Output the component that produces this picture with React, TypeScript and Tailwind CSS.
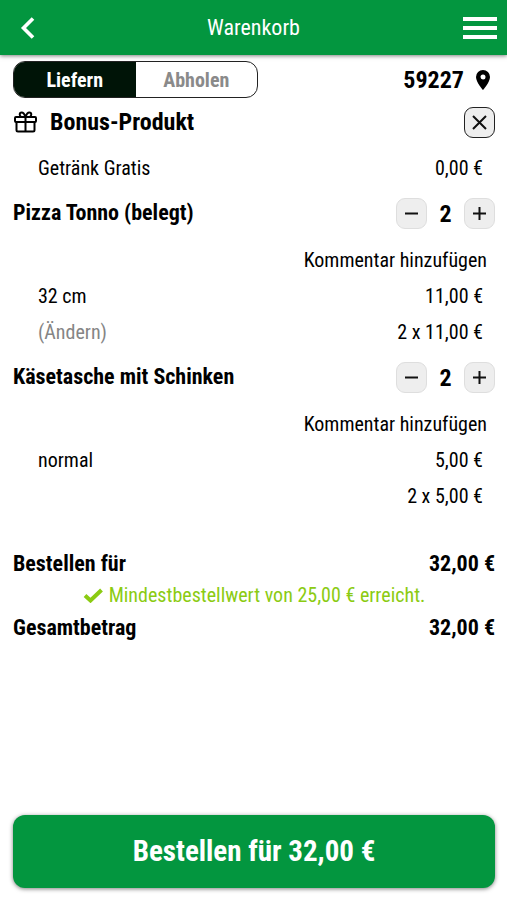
import { useState } from "react";
import type { ReactNode } from "react";

function Stepper({ name }: { name: string }) {
  const [count, setCount] = useState(2);
  const button =
    "flex size-[31px] items-center justify-center rounded-[9px] border border-[#dedede] bg-[#eeeeee]";
  return (
    <div className="flex items-center">
      <button type="button" aria-label={`${name} weniger`} className={button} onClick={() => setCount(Math.max(1, count - 1))}>
        <svg viewBox="0 0 15 15" className="size-[15px]" fill="none" stroke="#111" strokeWidth="2" aria-hidden="true">
          <path d="M1 7.500h13" />
        </svg>
      </button>
      <span className="w-[37px] text-center text-2xl leading-7 font-bold">{count}</span>
      <button type="button" aria-label={`${name} mehr`} className={button} onClick={() => setCount(count + 1)}>
        <svg viewBox="0 0 15 15" className="size-[15px]" fill="none" stroke="#111" strokeWidth="2" aria-hidden="true">
          <path d="M1 7.500h13M7.500 1v13" />
        </svg>
      </button>
    </div>
  );
}

function Line({ left, right }: { left?: ReactNode; right: string }) {
  return (
    <div className="flex h-9 items-center justify-between pr-3 pl-[25px]">
      <span>{left}</span>
      <span>{right}</span>
    </div>
  );
}

function Item({ name, children }: { name: string; children: ReactNode }) {
  return (
    <section className="mt-3">
      <div className="flex items-start justify-between">
        <h2 className="text-[22px] leading-[30px] font-bold">{name}</h2>
        <Stepper name={name} />
      </div>
      <div className="mt-[13px] flex h-9 items-center justify-end pr-2">
        <button type="button">Kommentar hinzufügen</button>
      </div>
      {children}
    </section>
  );
}

function Total({ label, value }: { label: string; value: string }) {
  return (
    <div className="flex h-8 items-center justify-between text-[22px] font-bold">
      <span>{label}</span>
      <span>{value}</span>
    </div>
  );
}

export default function App() {
  const [pickup, setPickup] = useState(false);
  return (
    <div className="flex min-h-screen flex-col bg-white font-['Roboto_Condensed',Roboto,sans-serif] text-[20px] text-black">
      <header className="grid h-[55px] grid-cols-[1fr_auto_1fr] items-center bg-[#03963f] px-[10px] text-white shadow-[0_1px_4px_rgba(0,0,0,0.5)]">
        <button type="button" aria-label="Zurück" className="justify-self-start pl-[10px]">
          <svg viewBox="0 0 16 22" className="h-[22px] w-4" fill="none" stroke="currentColor" strokeWidth="3.6" aria-hidden="true">
            <path d="M13 1.500 3.500 11 13 20.500" />
          </svg>
        </button>
        <h1 className="text-[22px]">Warenkorb</h1>
        <button type="button" aria-label="Menü" className="justify-self-end">
          <svg viewBox="0 0 34 24" className="h-6 w-[34px]" fill="currentColor" aria-hidden="true">
            <path d="M0 1h34v4H0zM0 10h34v4H0zM0 19h34v4H0z" />
          </svg>
        </button>
      </header>

      <main className="flex grow flex-col pt-[6px] pr-3 pb-3 pl-[13px]">
        <div className="flex items-center justify-between">
          <div className="grid h-[37px] w-[245px] grid-cols-2 overflow-hidden rounded-[12px] border border-[#222] font-bold">
            <button type="button" aria-pressed={!pickup} onClick={() => setPickup(false)} className={pickup ? "text-[#8a8a8a]" : "bg-[#001407] text-white"}>
              Liefern
            </button>
            <button type="button" aria-pressed={pickup} onClick={() => setPickup(true)} className={pickup ? "bg-[#001407] text-white" : "text-[#8a8a8a]"}>
              Abholen
            </button>
          </div>
          <button type="button" className="flex items-center gap-3 pr-[5px] text-2xl font-bold">
            59227
            <svg viewBox="0 0 14 20" className="h-5 w-[14px]" fill="currentColor" aria-hidden="true">
              <path fillRule="evenodd" d="M7 0a7 7 0 0 0-7 7c0 5.200 7 13 7 13s7-7.800 7-13a7 7 0 0 0-7-7Zm0 4.500a2.500 2.500 0 1 1 0 5 2.500 2.500 0 0 1 0-5Z" />
            </svg>
          </button>
        </div>

        <section className="mt-[9px]">
          <div className="flex items-start justify-between">
            <h2 className="flex items-center gap-3 text-2xl leading-[30px] font-bold">
              <svg viewBox="0 0 25 22" className="h-[22px] w-[25px]" fill="none" stroke="currentColor" strokeWidth="2" strokeLinejoin="round" aria-hidden="true">
                <rect x="2" y="6" width="21" height="5" rx="1" />
                <path d="M3.500 11v8a1.500 1.500 0 0 0 1.500 1.500h15a1.500 1.500 0 0 0 1.500-1.500v-8M12.500 6v14.500M12.500 6c-1-3-2.200-4.500-3.800-4.500C6 1.500 6.200 5.500 8.500 6M12.500 6c1-3 2.200-4.500 3.800-4.500C19 1.500 18.800 5.500 16.500 6" />
              </svg>
              Bonus-Produkt
            </h2>
            <button type="button" aria-label="Bonus-Produkt entfernen" className="flex size-[31px] items-center justify-center rounded-[9px] border border-[#222] bg-[#eeeeee]">
              <svg viewBox="0 0 15 15" className="size-[15px]" fill="none" stroke="#111" strokeWidth="2" aria-hidden="true">
                <path d="m1 1 13 13M14 1 1 14" />
              </svg>
            </button>
          </div>
          <div className="mt-3">
            <Line left="Getränk Gratis" right="0,00 €" />
          </div>
        </section>

        <Item name="Pizza Tonno (belegt)">
          <Line left="32 cm" right="11,00 €" />
          <Line left={<button type="button" className="text-[#858585]">(Ändern)</button>} right="2 x 11,00 €" />
        </Item>

        <Item name="Käsetasche mit Schinken">
          <Line left="normal" right="5,00 €" />
          <Line right="2 x 5,00 €" />
        </Item>

        <section className="mt-[33px]">
          <Total label="Bestellen für" value="32,00 €" />
          <p className="flex h-8 items-center justify-center gap-[6px] text-[#8bcb12]">
            <svg viewBox="0 0 20 15" className="h-[15px] w-5" fill="none" stroke="currentColor" strokeWidth="4" aria-hidden="true">
              <path d="m2 7.500 5.500 5L18.500 2" />
            </svg>
            Mindestbestellwert von 25,00 € erreicht.
          </p>
          <Total label="Gesamtbetrag" value="32,00 €" />
        </section>

        <button type="button" className="mt-auto h-[73px] w-full rounded-[12px] bg-[#03963f] text-[29px] font-bold text-white shadow-[0_1px_4px_rgba(0,0,0,0.5)]">
          Bestellen für 32,00 €
        </button>
      </main>
    </div>
  );
}
